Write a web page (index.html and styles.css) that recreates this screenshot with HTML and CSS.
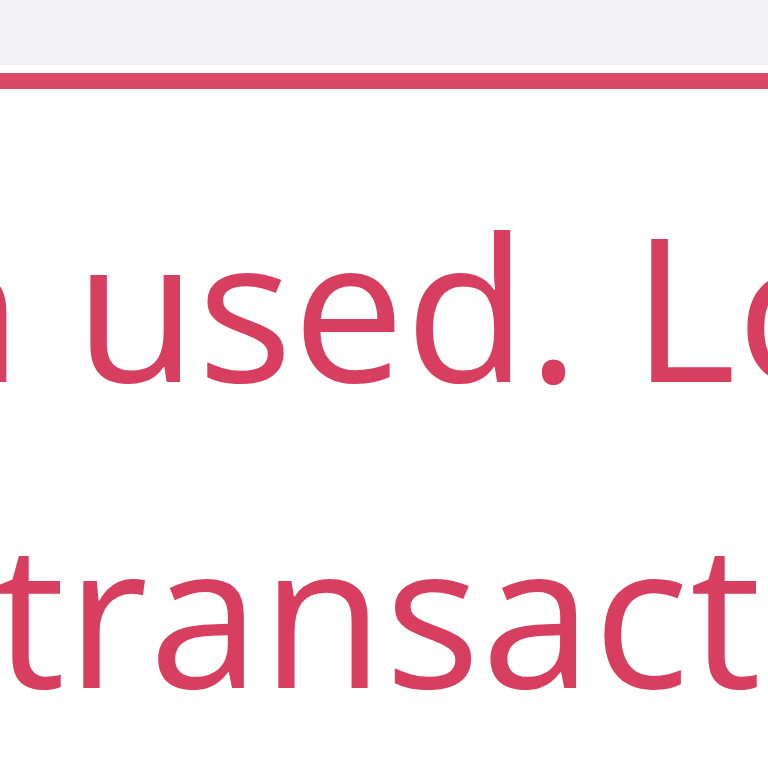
FILE: index.html
```html
<!DOCTYPE html>
<html>
<head>
<meta charset="utf-8">
<link rel="stylesheet" href="styles.css">
</head>
<body>
<div class="page">
  <div class="topbar"></div>
  <div class="alert-rule"></div>
  <div class="message">
    <span class="line line-1">n used. Look</span>
    <span class="line line-2">transaction</span>
  </div>
</div>
</body>
</html>
```
FILE: styles.css
```css
html, body {
  margin: 0;
  padding: 0;
  background: #ffffff;
  overflow: hidden;
}
.page {
  width: 768px;
  height: 768px;
  overflow: hidden;
  display: flex;
  flex-direction: column;
}
.topbar {
  height: 64px;
  background: #f4f4f6;
  border-bottom: 1px solid #f3e6ea;
}
.alert-rule {
  height: 16px;
  margin-top: 8px;
  background: #da4a68;
}
.message {
  margin-top: 63px;
  font-family: "Open Sans", "Noto Sans", sans-serif;
  font-size: 200px;
  font-weight: 400;
  line-height: 306px;
  color: #d73e5f;
  white-space: nowrap;
}
.line {
  display: block;
}
.line-1 {
  margin-left: -100px;
}
.line-2 {
  margin-left: -6px;
  letter-spacing: 1px;
}
```
